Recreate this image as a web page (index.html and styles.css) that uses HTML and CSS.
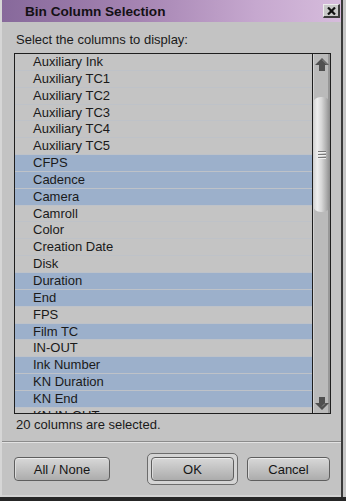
FILE: index.html
```html
<!DOCTYPE html>
<html>
<head>
<meta charset="utf-8">
<link rel="stylesheet" href="styles.css">
</head>
<body>
<div class="window">
  <div class="titlebar">
    <span class="title">Bin Column Selection</span>
    <span class="close">
      <svg width="9" height="8" viewBox="0 0 9 8"><path d="M1 0.5 L8 7.5 M8 0.5 L1 7.5" stroke="#111" stroke-width="2.2" fill="none"/></svg>
    </span>
  </div>
  <div class="content">
    <div class="label">Select the columns to display:</div>
    <div class="listbox">
      <div class="rows">
        <div class="row">Auxiliary Ink</div>
        <div class="row">Auxiliary TC1</div>
        <div class="row">Auxiliary TC2</div>
        <div class="row">Auxiliary TC3</div>
        <div class="row">Auxiliary TC4</div>
        <div class="row">Auxiliary TC5</div>
        <div class="row sel">CFPS</div>
        <div class="row sel">Cadence</div>
        <div class="row sel">Camera</div>
        <div class="row">Camroll</div>
        <div class="row">Color</div>
        <div class="row">Creation Date</div>
        <div class="row">Disk</div>
        <div class="row sel">Duration</div>
        <div class="row sel">End</div>
        <div class="row">FPS</div>
        <div class="row sel">Film TC</div>
        <div class="row">IN-OUT</div>
        <div class="row sel">Ink Number</div>
        <div class="row sel">KN Duration</div>
        <div class="row sel">KN End</div>
        <div class="row">KN IN-OUT</div>
      </div>
      <div class="scrollbar">
        <div class="sb-btn">
          <svg width="14" height="13" viewBox="0 0 14 13"><path d="M7 0 L14 7 L10 7 L10 13 L4 13 L4 7 L0 7 Z" fill="#505050"/><path d="M7 1.5 L12 6.5" stroke="#8a8a8a" stroke-width="1"/></svg>
        </div>
        <div class="track">
          <div class="thumb">
            <span class="grip"></span><span class="grip"></span><span class="grip"></span>
          </div>
        </div>
        <div class="sb-btn down">
          <svg width="14" height="13" viewBox="0 0 14 13"><path d="M4 0 L10 0 L10 6 L14 6 L7 13 L0 6 L4 6 Z" fill="#505050"/><path d="M10 6.5 L7 9.5" stroke="#8a8a8a" stroke-width="1"/></svg>
        </div>
      </div>
    </div>
    <div class="status">20 columns are selected.</div>
  </div>
  <div class="sep"></div>
  <div class="footer">
    <button class="btn allnone">All / None</button>
    <div class="default-frame"><button class="btn ok">OK</button></div>
    <button class="btn cancel">Cancel</button>
  </div>
</div>
</body>
</html>
```

FILE: styles.css
```css
html, body {
  margin: 0;
  padding: 0;
  background: #c4c4c4;
}

.window {
  width: 346px;
  height: 501px;
  box-sizing: border-box;
  display: flex;
  flex-direction: column;
  background: #c3c3c3;
  border-bottom: 4px solid #262626;
  box-shadow: inset 2px 0 #d6d6d6, inset -3px 0 #c6c6c6, inset -5px 0 #3a3a3a, inset 0 -2px #d2d2d2;
  font-family: "Liberation Sans", Arial, sans-serif;
  font-size: 13px;
  color: #1a1a1a;
  overflow: hidden;
}

.titlebar {
  height: 22px;
  margin: 0 5px 0 2px;
  display: flex;
  align-items: center;
  padding-left: 23px;
  background: linear-gradient(to right, #87699b 0%, #a584b2 40%, #c6a8cf 75%, #d6bcdc 100%);
}

.title {
  font-weight: bold;
  font-size: 13.6px;
  color: #141014;
}

.close {
  margin-left: auto;
  margin-right: 1px;
  width: 17px;
  height: 14px;
  box-sizing: border-box;
  background: #c8c8c8;
  border-top: 1px solid #ececec;
  border-left: 1px solid #ececec;
  border-right: 2px solid #3c3c3c;
  border-bottom: 2px solid #3c3c3c;
  display: flex;
  align-items: center;
  justify-content: center;
}

.content {
  padding: 0 15px 0 14px;
  display: flex;
  flex-direction: column;
}

.label {
  margin-top: 10px;
  line-height: 16px;
  padding-left: 2px;
}

.listbox {
  margin-top: 5px;
  height: 361px;
  box-sizing: border-box;
  border: 1px solid #1e1e1e;
  display: flex;
  background: #c4c4c4;
}

.rows {
  flex: 1;
  overflow: hidden;
}

.row {
  height: 16.85px;
  box-sizing: border-box;
  line-height: 16px;
  padding-left: 18px;
  border-bottom: 1px solid #bec2c8;
  white-space: nowrap;
}

.row.sel {
  background: #9cb0cb;
}

.scrollbar {
  width: 17px;
  border-left: 1px solid #1e1e1e;
  display: flex;
  flex-direction: column;
  background: #bababa;
  box-shadow: inset 1px 0 #d2d2d2, inset -2px 0 #979797;
}

.sb-btn {
  height: 20px;
  display: flex;
  justify-content: center;
  padding-top: 4px;
  box-sizing: border-box;
}

.track {
  flex: 1;
}

.thumb {
  margin-top: 23px;
  height: 115px;
  border-radius: 8px / 6px;
  background: linear-gradient(to right, #cfcfcf 0%, #eeeeee 25%, #d8d8d8 50%, #b4b4b4 75%, #8c8c8c 100%);
  display: flex;
  flex-direction: column;
  align-items: center;
  justify-content: center;
  gap: 2px;
}

.grip {
  width: 8px;
  height: 1px;
  background: #7a7a7a;
  box-shadow: 0 1px #f0f0f0;
}

.status {
  margin-top: 3px;
  line-height: 16px;
  padding-left: 2px;
}

.sep {
  margin: 8px 5px 0 2px;
  height: 1px;
  background: #8c8c8c;
  border-bottom: 1px solid #e2e2e2;
}

.footer {
  margin-top: 10px;
  padding-left: 14px;
  display: flex;
  align-items: center;
}

.btn {
  height: 24px;
  box-sizing: border-box;
  border: 1px solid #5e5e5e;
  border-radius: 4px;
  background: linear-gradient(#d8d8d8 0%, #c4c4c4 45%, #acacac 100%);
  box-shadow: inset 0 1px #ececec, inset 1px 0 #dcdcdc;
  font-family: "Liberation Sans", Arial, sans-serif;
  font-size: 13px;
  color: #151515;
  padding: 0;
}

.allnone {
  width: 96px;
}

.default-frame {
  margin-left: 37px;
  width: 91px;
  height: 32px;
  box-sizing: border-box;
  border: 1px solid #6c6c6c;
  border-radius: 5px;
  background: #d4d4d4;
  padding: 3px;
  display: flex;
}

.ok {
  width: 83px;
}

.cancel {
  margin-left: 9px;
  width: 83px;
}
```
